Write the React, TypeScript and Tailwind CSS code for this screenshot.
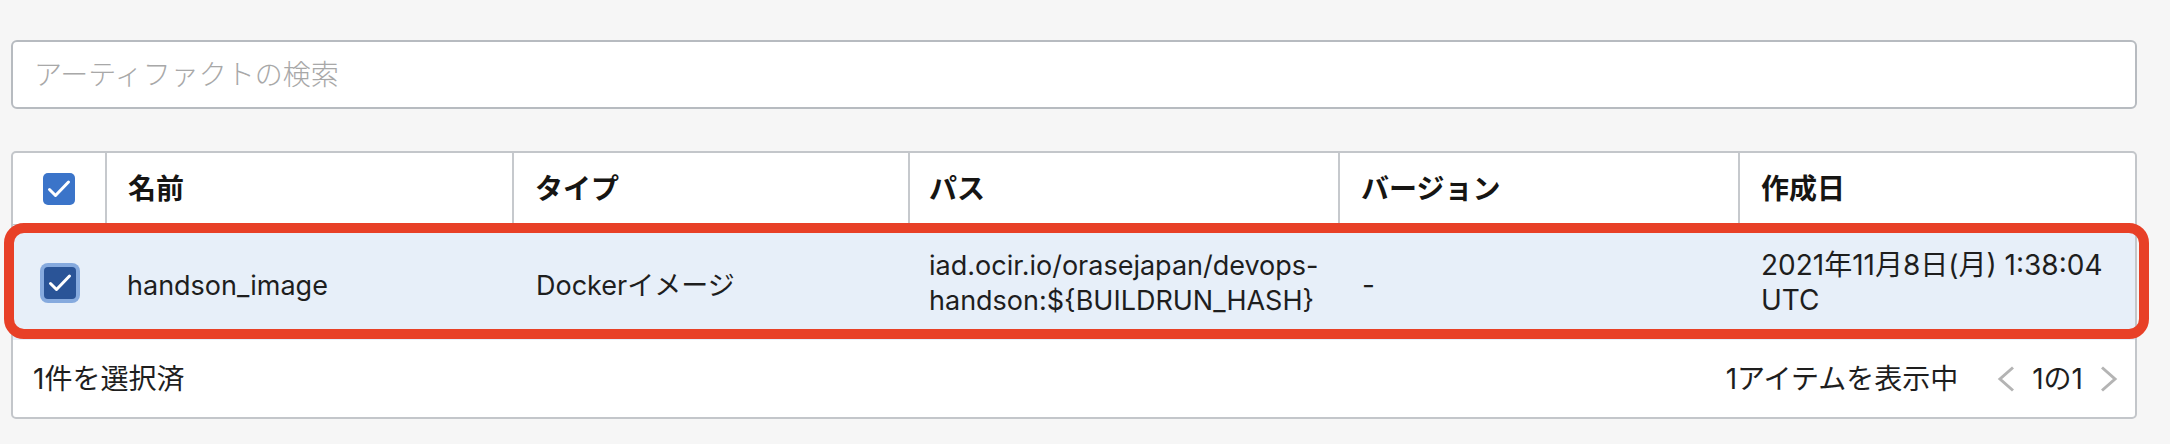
import React from "react";

const Check = () => (
  <svg viewBox="0 0 32 32" className="h-full w-full" fill="none">
    <path
      d="M6.5 16.5L12.5 22.5L25.5 9"
      stroke="white"
      strokeWidth="3"
      strokeLinecap="round"
      strokeLinejoin="round"
    />
  </svg>
);

const Chevron = ({ flip }: { flip?: boolean }) => (
  <svg viewBox="0 0 20 26" className="h-[26px] w-[20px]" fill="none">
    <path
      d={flip ? "M3 1.5L16 13L3 24.5" : "M17 1.5L4 13L17 24.5"}
      stroke="#b4b4b4"
      strokeWidth="3"
    />
  </svg>
);

const cols = "grid grid-cols-[94px_407px_396px_430px_400px_1fr]";

export default function App() {
  return (
    <div className="min-h-[444px] bg-[#f6f6f6] pl-[11px] pr-[33px] pt-[40px] font-['Inter','Noto_Sans_CJK_JP',sans-serif] text-[28px] text-[#1e1e1e]">
      <input
        type="text"
        placeholder="アーティファクトの検索"
        className="block h-[69px] w-full rounded-[6px] border-2 border-[#b7bbc0] bg-white px-[21px] text-[28px] font-light outline-none placeholder:text-[#a8a8a8]"
      />

      <div className="mt-[42px] rounded-[5px] border-2 border-[#c3c6ca] bg-white">
        {/* header */}
        <div className={`${cols} h-[72px] border-b border-[#c3c6ca] font-bold text-[#161513]`}>
          <div className="flex items-center justify-center border-r-2 border-[#c6c9cd]">
            <div className="h-[32px] w-[32px] rounded-[5px] bg-[#3b74c9]">
              <Check />
            </div>
          </div>
          <div className="flex items-center border-r-2 border-[#c6c9cd] px-[21px]">名前</div>
          <div className="flex items-center border-r-2 border-[#c6c9cd] px-[21px]">タイプ</div>
          <div className="flex items-center border-r-2 border-[#c6c9cd] px-[19px]">パス</div>
          <div className="flex items-center border-r-2 border-[#c6c9cd] px-[21px]">バージョン</div>
          <div className="flex items-center px-[21px]">作成日</div>
        </div>

        {/* selected row */}
        <div className={`${cols} relative h-[115px] bg-[#e7eff9] leading-[35px]`}>
          <div className="flex items-center justify-center">
            <div className="rounded-[8px] bg-[#86aade] p-[4px]">
              <div className="h-[32px] w-[32px] rounded-[4px] bg-[#2a5497]">
                <Check />
              </div>
            </div>
          </div>
          <div className="flex items-center px-[20px] pt-[6px] text-[27px]">handson_image</div>
          <div className="flex items-center px-[22px] pt-[6px] text-[27px]">Dockerイメージ</div>
          <div className="flex items-center px-[19px] text-[27px]">
            <span>
              iad.ocir.io/orasejapan/devops-
              <br />
              handson:{"${BUILDRUN_HASH}"}
            </span>
          </div>
          <div className="flex items-center px-[22px] pt-[6px]">-</div>
          <div className="flex items-center px-[21px]">
            <span>
              2021年11月8日(月) 1:38:04
              <br />
              UTC
            </span>
          </div>
          <div className="pointer-events-none absolute -top-[2px] bottom-[1px] -left-[9px] -right-[14px] rounded-[20px] border-[10px] border-[#e84027]" />
        </div>

        {/* footer */}
        <div className="flex h-[77px] items-center justify-between pl-[20px] pr-[16px]">
          <span>1件を選択済</span>
          <div className="flex items-center">
            <span className="mr-[38px]">1アイテムを表示中</span>
            <Chevron />
            <span className="mx-[16px]">1の1</span>
            <Chevron flip />
          </div>
        </div>
      </div>
    </div>
  );
}
